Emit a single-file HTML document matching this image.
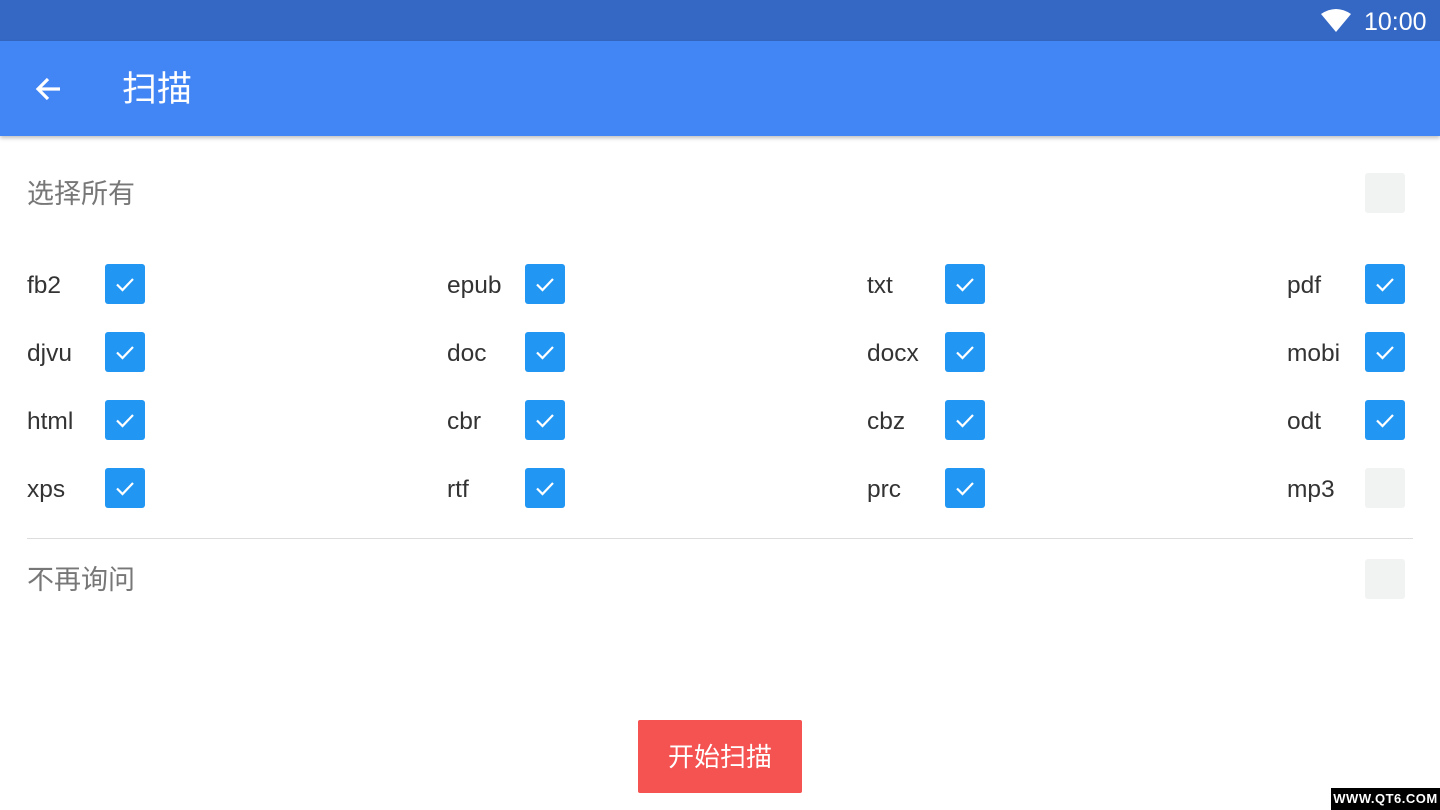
<!DOCTYPE html><html><head><meta charset="utf-8"><style>
body{margin:0;width:1440px;height:810px;position:relative;overflow:hidden;background:#fff;font-family:"Liberation Sans","Noto Sans CJK SC",sans-serif}
.a{position:absolute}
.cb{position:absolute;width:40px;height:40px;border-radius:3px;background:#2196f3}
.cb.off{background:#f1f2f2}
.lb{position:absolute;font-size:24.5px;color:#333;line-height:30px}
</style></head><body>
<div class="a" style="left:0;top:0;width:1440px;height:41px;background:#3568c4"></div>
<svg class="a" style="left:1320px;top:8px" width="32" height="24" viewBox="0 0 32 24"><path d="M1 6 Q16 -4 31 6 L16 24 Z" fill="#fff"/></svg>
<div class="a" style="left:1364px;top:7px;font-size:25px;color:#fff;line-height:30px">10:00</div>
<div class="a" style="left:0;top:41px;width:1440px;height:95px;background:#4285f4;box-shadow:0 2px 4px rgba(0,0,0,.25)"></div>
<svg class="a" style="left:32px;top:74px" width="32" height="32" viewBox="0 0 32 32"><path d="M28 15H7M16 5L6 15L16 25" stroke="#fff" stroke-width="3.2" fill="none"/></svg>
<div class="a" style="left:122px;top:68px;font-size:35px;color:#fff;line-height:44px">扫描</div>
<div class="a" style="left:27px;top:176px;font-size:27px;color:#777;line-height:36px">选择所有</div>
<div class="cb off" style="left:1365px;top:173px"></div>
<div class="a" style="left:27px;top:538px;width:1386px;height:1px;background:#ddd"></div>
<div class="a" style="left:27px;top:562px;font-size:27px;color:#777;line-height:36px">不再询问</div>
<div class="cb off" style="left:1365px;top:559px"></div>
<div id="g"></div>
<div class="a" style="left:638px;top:720px;width:164px;height:73px;background:#f55252;border-radius:2px;color:#fff;font-size:26px;line-height:75px;text-align:center">开始扫描</div>
<div class="a" style="left:1331px;top:788px;width:109px;height:22px;background:#000;color:#fff;font-size:13px;font-weight:bold;line-height:22px;text-align:center;letter-spacing:0.5px">WWW.QT6.COM</div>
<script>
var L=[["fb2","epub","txt","pdf"],["djvu","doc","docx","mobi"],["html","cbr","cbz","odt"],["xps","rtf","prc","mp3"]],h="";
for(var r=0;r<4;r++)for(var c=0;c<4;c++){var x=c*420,y=264+r*68,off=(r==3&&c==3);
h+='<div class="lb" style="left:'+(27+x)+'px;top:'+(y+7)+'px">'+L[r][c]+'</div>';
h+='<div class="cb'+(off?' off':'')+'" style="left:'+(105+x)+'px;top:'+y+'px">'+(off?'':'<svg width="40" height="40"><path d="M12 20.5L17.5 26L28 15" stroke="#fff" stroke-width="2.2" fill="none"/></svg>')+'</div>';}
document.getElementById("g").innerHTML=h;
</script>
</body></html>
